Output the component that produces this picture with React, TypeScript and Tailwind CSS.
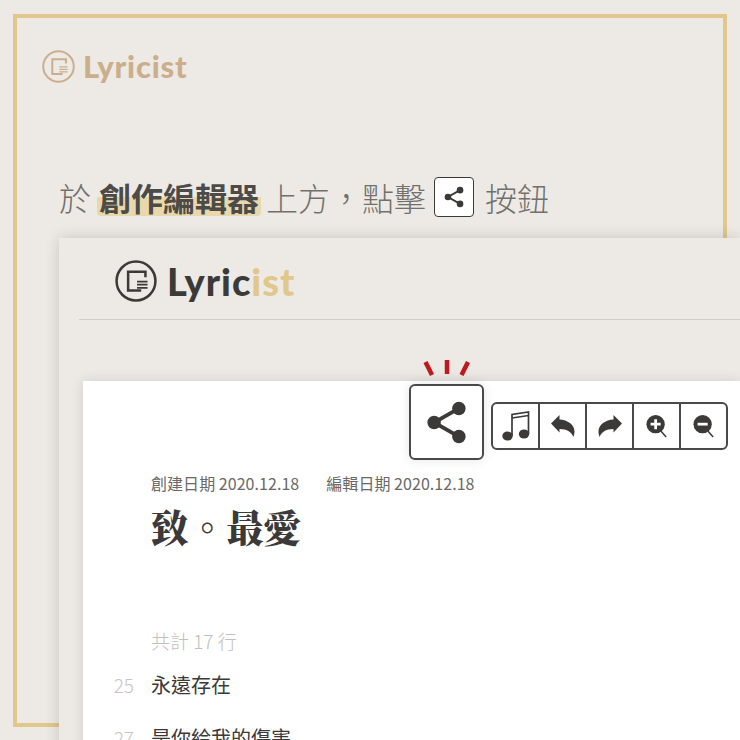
import { ReactNode } from "react";

const SANS = "font-['Noto_Sans_CJK_TC','Noto_Sans',sans-serif]";

function LogoMark({ size, color }: { size: number; color: string }) {
  return (
    <svg width={size} height={size} viewBox="0 0 40 40" fill="none" stroke={color} className="shrink-0">
      <circle cx="20" cy="20" r="18.5" strokeWidth="2.4" />
      <path d="M29 16.500V11.200H12.500V29H25" strokeWidth="2.400" />
      <path d="M21 20.500h10M21 23.500h10M21 26.500h10" strokeWidth="1.700" />
    </svg>
  );
}

function ShareIcon({ size }: { size: number }) {
  return (
    <svg width={size} height={size} viewBox="0 0 40 40" fill="#3b3a38" stroke="#3b3a38">
      <path d="M31 7.500 9 20l22 12.500" fill="none" strokeWidth="3.400" />
      <circle cx="31" cy="7.500" r="6" stroke="none" />
      <circle cx="9" cy="20" r="6" stroke="none" />
      <circle cx="31" cy="32.500" r="6" stroke="none" />
    </svg>
  );
}

function ToolButton({ children, last }: { children: ReactNode; last?: boolean }) {
  return (
    <div className={`h-full flex items-center justify-center ${last ? "flex-1" : "w-[47px] shrink-0 border-r-2 border-[#4a4947]"}`}>
      {children}
    </div>
  );
}

function Zoom({ plus }: { plus?: boolean }) {
  return (
    <svg width="22" height="24" viewBox="0 0 24 26">
      <path d="m14 16 8 9" stroke="#3b3a38" strokeWidth="1.600" />
      <circle cx="10.500" cy="11" r="10" fill="#3b3a38" />
      <path d={plus ? "M5 11h11M10.500 5.500v11" : "M5 11h11"} stroke="#fff" strokeWidth="3" />
    </svg>
  );
}

const ARROW = "M0 8.500 8.500 0v4.500c8 .5 15 5 15 12 0 2-.5 4-1.200 5.500-1.500-4.500-6-8-13.800-8v3.500z";

export default function App() {
  return (
    <div className={`relative w-[740px] h-[740px] overflow-hidden bg-[#edeae6] ${SANS}`}>
      {/* gold frame behind everything */}
      <div className="absolute left-[13px] top-[14px] w-[714px] h-[713px] border-[4px] border-[#e0c88c]" />

      <div className="relative flex flex-col">
        {/* faded logo */}
        <div className="flex items-center gap-[8px] pl-[42px] pt-[32px] h-[100px]">
          <LogoMark size={33} color="#ccae8c" />
          <span className="font-['Lato',sans-serif] font-black text-[31px] leading-[36px] text-[#ccae8c] tracking-[0.8px]">Lyricist</span>
        </div>

        {/* heading */}
        <div className="flex items-center pl-[59px] mt-[76px] h-[42px] text-[32px] text-[#72706d] font-light leading-none whitespace-nowrap">
          <span>於</span>
          <span className="ml-[6px] px-[2px] font-bold text-[#4d4b48] bg-[linear-gradient(transparent_50%,#e8d8ac_50%)] rounded-[4px] h-[38px] flex items-center">創作編輯器</span>
          <span className="ml-[5px]">上方，點擊</span>
          <div className="ml-[8px] w-[40px] h-[40px] bg-white border border-[#3b3a38] rounded-[4px] flex items-center justify-center">
            <ShareIcon size={22} />
          </div>
          <span className="ml-[11px]">按鈕</span>
        </div>

        {/* app window */}
        <div className="ml-[59px] mt-[20px] h-[520px] bg-[#edeae6] shadow-[0_0_14px_rgba(0,0,0,0.16)]">
          <div className="ml-[20px] h-[82px] border-b border-[#d0cec9] flex items-center gap-[10px] pl-[36px] pt-[4px]">
            <LogoMark size={42} color="#3b3a38" />
            <span className="font-['Lato',sans-serif] font-black text-[38px] leading-[40px] tracking-[1px] text-[#3b3a38]">
              Lyric<span className="text-[#e0c88c]">ist</span>
            </span>
          </div>

          {/* editor sheet */}
          <div className="relative ml-[24px] mt-[61px] h-[400px] bg-white shadow-[0_0_12px_rgba(0,0,0,0.12)]">
            <div className="absolute left-[326px] top-[3px] w-[75px] h-[76px] bg-white border-2 border-[#4a4947] rounded-[6px] flex items-center justify-center shadow-[0_0_12px_rgba(0,0,0,0.1)]">
              <ShareIcon size={45} />
            </div>
            <svg className="absolute left-[339px] top-[-22px]" width="50" height="18" viewBox="0 0 50 18" stroke="#c0181d" strokeWidth="4.500">
              <path d="M3.500 3 10 16M25 1v14M46 3l-6.500 13" />
            </svg>
            <div className="absolute left-[408px] top-[21px] w-[237px] h-[48px] bg-white border-2 border-[#4a4947] rounded-[6px] flex items-center">
              <ToolButton>
                <svg width="28" height="30" viewBox="0 0 28 30" fill="#3b3a38" stroke="#3b3a38">
                  <ellipse cx="5.500" cy="25" rx="5.200" ry="4.500" stroke="none" />
                  <ellipse cx="22" cy="23" rx="5.200" ry="4.500" stroke="none" />
                  <path d="M10 25V3.500L26.500 1v22M10 7 26.500 4.500" fill="none" strokeWidth="1.700" />
                </svg>
              </ToolButton>
              <ToolButton>
                <svg width="24" height="22" viewBox="0 0 24 22" fill="#3b3a38">
                  <path d={ARROW} />
                </svg>
              </ToolButton>
              <ToolButton>
                <svg width="24" height="22" viewBox="0 0 24 22" fill="#3b3a38" className="-scale-x-100">
                  <path d={ARROW} />
                </svg>
              </ToolButton>
              <ToolButton><Zoom plus /></ToolButton>
              <ToolButton last><Zoom /></ToolButton>
            </div>

            <div className="pl-[68px] pt-[90px]">
              <div className="flex gap-[27px] text-[16px] leading-[24px] tracking-[0.05px] text-[#6b6966]">
                <span>創建日期 2020.12.18</span>
                <span>編輯日期 2020.12.18</span>
              </div>
              <h1 className="mt-[5px] text-[37.500px] leading-[52px] font-black text-[#3b3a38] font-['Noto_Serif_CJK_TC','Noto_Sans_CJK_TC',serif]">致。最愛</h1>
              <div className="mt-[76px] text-[19px] leading-[26px] font-light text-[#c2c0bd]">共計 17 行</div>
            </div>
            <div className="flex flex-col gap-[23px] mt-[16px]">
              <div className="flex items-center h-[30px]">
                <span className="w-[51px] text-right text-[19px] font-light text-[#c8c6c3]">25</span>
                <span className="ml-[17px] text-[20px] text-[#3b3a38]">永遠存在</span>
              </div>
              <div className="flex items-center h-[30px]">
                <span className="w-[51px] text-right text-[19px] font-light text-[#c8c6c3]">27</span>
                <span className="ml-[17px] text-[20px] text-[#3b3a38]">是你給我的傷害</span>
              </div>
            </div>
          </div>
        </div>
      </div>
    </div>
  );
}
